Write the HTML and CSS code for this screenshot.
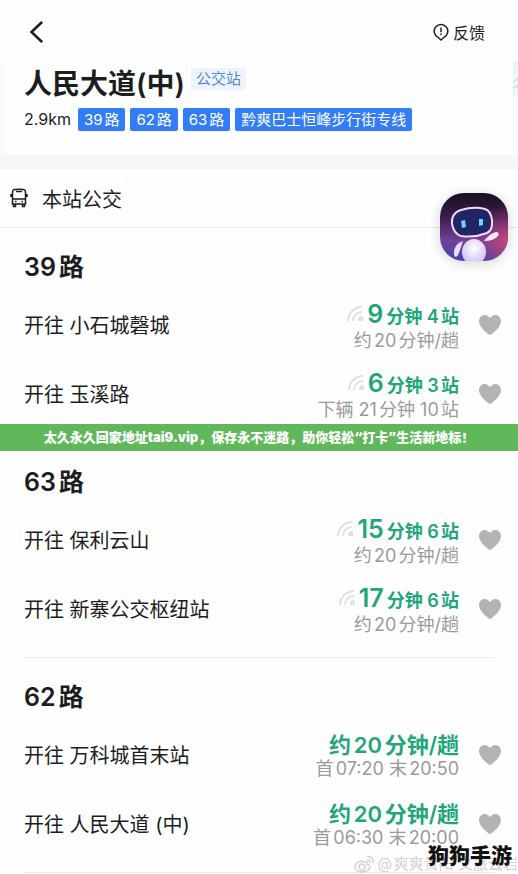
FILE: index.html
```html
<!DOCTYPE html>
<html lang="zh-CN">
<head>
    <meta charset="UTF-8">
    <meta name="viewport" content="width=device-width, initial-scale=1.0">
    <title>人民大道(中) 公交站</title>
    <link rel="stylesheet" href="styles.css">
</head>
<body>
    <!-- Shared icons -->
    <svg class="icon-defs" aria-hidden="true">
        <symbol id="heart" viewBox="0 0 24 22">
            <path d="M12 21 C11 21 1 13.500 1 7.200 C1 3.600 3.600 1 6.800 1 C9 1 11 2.300 12 4.200 C13 2.300 15 1 17.200 1 C20.400 1 23 3.600 23 7.200 C23 13.500 13 21 12 21 Z"/>
        </symbol>
        <symbol id="signal" viewBox="0 0 18 18">
            <path d="M2 16 A14 14 0 0 1 16 2 M7 16 A9 9 0 0 1 16 7"/>
            <path d="M13 15 A3 3 0 0 1 16 12 V15 Z"/>
        </symbol>
    </svg>

    <header class="topbar">
        <button class="icon-button" aria-label="返回">
            <svg class="back-icon" viewBox="0 0 14 22"><path d="M12.500 1.500 L2.500 11 L12.500 20.500"/></svg>
        </button>
        <button class="feedback">
            <svg class="feedback-icon" viewBox="0 0 16 18">
                <path d="M8 17 L5 14.300 A6.800 6.800 0 1 1 11 14.300 Z"/>
                <path d="M8 4.500 V9.200 M8 10.500 V12"/>
            </svg>
            反馈
        </button>
    </header>

    <section class="station">
        <svg class="map-edge" viewBox="0 0 5 34">
            <rect width="5" height="34" fill="#eef4f9" stroke="none"/>
            <path d="M0 21 L5 18 M0 27 L5 25" stroke="#c3d3dc"/>
        </svg>
        <div class="station-name">
            <h1>人民大道(中)</h1>
            <span class="station-type">公交站</span>
        </div>
        <div class="station-lines">
            <span class="distance">2.9km</span>
            <a class="line-tag" href="#line39">39路</a>
            <a class="line-tag" href="#line62">62路</a>
            <a class="line-tag" href="#line63">63路</a>
            <a class="line-tag" href="#line39">黔爽巴士恒峰步行街专线</a>
        </div>
    </section>

    <div class="section-title">
        <svg class="bus-icon" viewBox="0 0 18 20">
            <path d="M2.500 16 V4 Q2.500 2 4.500 1.600 Q9 .8 13.500 1.600 Q15.500 2 15.500 4 V16 Z M2.500 11 H15.500 M6 3.500 H12 M3.500 16 V18.500 H5.500 V16 M12.500 16 V18.500 H14.500 V16 M5 13.500 H6.500 M11.500 13.500 H13 M1 6 V9 M17 6 V9"/>
        </svg>
        <h2>本站公交</h2>
        <button class="assistant" aria-label="智能助手">
            <svg viewBox="0 0 68 68">
                <defs>
                    <linearGradient id="sky" x1="0" y1="0" x2="0" y2="1">
                        <stop offset="0" stop-color="#15101f"/>
                        <stop offset=".35" stop-color="#3c1c4b"/>
                        <stop offset=".7" stop-color="#71409b"/>
                        <stop offset="1" stop-color="#4840a6"/>
                    </linearGradient>
                    <radialGradient id="glow" cx="1" cy=".72" r=".55">
                        <stop offset="0" stop-color="#c54872"/>
                        <stop offset="1" stop-color="#a33f83" stop-opacity="0"/>
                    </radialGradient>
                    <radialGradient id="torso" cx=".5" cy=".35" r=".7">
                        <stop offset="0" stop-color="#fff"/>
                        <stop offset="1" stop-color="#c9b8f2"/>
                    </radialGradient>
                    <clipPath id="tile"><rect width="68" height="68" rx="24"/></clipPath>
                </defs>
                <g clip-path="url(#tile)">
                    <rect width="68" height="68" fill="url(#sky)"/>
                    <rect width="68" height="68" fill="url(#glow)"/>
                    <ellipse cx="34" cy="59" rx="12" ry="13" fill="url(#torso)"/>
                    <path d="M23 48 Q13 51 14 62 Q16 67 19 60 Z" fill="#e6def8"/>
                    <path d="M44 48 Q49 41 56 39 Q60 39 58 43 Q54 48 44 48 Z" fill="#f3e6f7"/>
                    <path d="M21 17 Q34 13 45 16 Q51 18 52 27 Q53 37 47 40 Q34 45 21 43 Q14 41 12 31 Q11 20 21 17 Z" fill="#242364" stroke="#eadcfa" stroke-width="2"/>
                    <path d="M21 28 L25 27 L26 34 L22 35 Z M39 26 L43 26 L43 32 L39 33 Z" fill="#60d9ff"/>
                </g>
            </svg>
        </button>
    </div>

    <main class="routes">
        <section class="route" id="line39">
            <h3>39路</h3>
            <div class="direction">
                <span class="destination">开往 小石城磬城</span>
                <div class="arrival">
                    <div class="next"><svg class="signal"><use href="#signal"/></svg><strong>9</strong> 分钟 4站</div>
                    <div class="later">约20分钟/趟</div>
                </div>
                <button class="favorite" aria-label="收藏"><svg><use href="#heart"/></svg></button>
            </div>
            <div class="direction">
                <span class="destination">开往 玉溪路</span>
                <div class="arrival">
                    <div class="next"><svg class="signal"><use href="#signal"/></svg><strong>6</strong> 分钟 3站</div>
                    <div class="later">下辆 21分钟 10站</div>
                </div>
                <button class="favorite" aria-label="收藏"><svg><use href="#heart"/></svg></button>
            </div>
            <p class="banner">太久永久回家地址tai9.vip，保存永不迷路，助你轻松“打卡”生活新地标！</p>
        </section>

        <section class="route" id="line63">
            <h3>63路</h3>
            <div class="direction">
                <span class="destination">开往 保利云山</span>
                <div class="arrival">
                    <div class="next"><svg class="signal"><use href="#signal"/></svg><strong>15</strong> 分钟 6站</div>
                    <div class="later">约20分钟/趟</div>
                </div>
                <button class="favorite" aria-label="收藏"><svg><use href="#heart"/></svg></button>
            </div>
            <div class="direction">
                <span class="destination">开往 新寨公交枢纽站</span>
                <div class="arrival">
                    <div class="next"><svg class="signal"><use href="#signal"/></svg><strong>17</strong> 分钟 6站</div>
                    <div class="later">约20分钟/趟</div>
                </div>
                <button class="favorite" aria-label="收藏"><svg><use href="#heart"/></svg></button>
            </div>
        </section>

        <section class="route" id="line62">
            <h3>62路</h3>
            <div class="direction">
                <span class="destination">开往 万科城首末站</span>
                <div class="arrival">
                    <div class="next interval">约20分钟/趟</div>
                    <div class="later">首07:20 末20:50</div>
                </div>
                <button class="favorite" aria-label="收藏"><svg><use href="#heart"/></svg></button>
            </div>
            <div class="direction">
                <span class="destination">开往 人民大道 (中)</span>
                <div class="arrival">
                    <div class="next interval">约20分钟/趟</div>
                    <div class="later">首06:30 末20:00</div>
                </div>
                <button class="favorite" aria-label="收藏"><svg><use href="#heart"/></svg></button>
            </div>
            <div class="credit">
                <svg class="weibo" viewBox="0 0 20 18">
                    <path d="M8 6 C4 6 1 9 1 12 C1 15 4 17 8 17 C13 17 16 14.500 16 12 C16 10 14 9.500 13 9 C13.500 6.500 11.500 6 9.500 7 Q9.500 6 8 6 Z M13 5 Q16 4.500 16 8 M13 1.500 Q19.500 1 19 8"/>
                    <circle cx="8" cy="12" r="3"/>
                </svg>
                <span>@爽爽贵阳 文旅云岩</span>
            </div>
            <div class="site-mark">狗狗手游</div>
        </section>
    </main>
</body>
</html>
```

FILE: styles.css
```css
:root {
    --text: #1c1d1f;
    --muted: #999a9c;
    --green: #21a67a;
    --blue: #327df6;
    --line: #ececee;
}

* {
    margin: 0;
    padding: 0;
    box-sizing: border-box;
}

body {
    font-family: Inter, "Noto Sans CJK SC", sans-serif;
    font-size: 20px;
    color: var(--text);
    background: #fefefe;
    overflow-x: hidden;
    text-autospace: normal;
}

button {
    border: none;
    background: none;
    color: inherit;
    font: inherit;
    cursor: pointer;
}

svg {
    display: block;
    fill: none;
    stroke: currentColor;
}

.icon-defs {
    position: absolute;
    width: 0;
    height: 0;
}

/* Top bar */
.topbar {
    display: flex;
    justify-content: space-between;
    align-items: center;
    height: 64px;
    padding: 0 33px 0 29px;
}

.back-icon {
    width: 14px;
    height: 22px;
    stroke-width: 2.5;
    stroke-linecap: round;
}

.feedback {
    display: flex;
    align-items: center;
    gap: 4px;
    font-size: 16px;
}

.feedback-icon {
    width: 16px;
    height: 18px;
    stroke-width: 1.5;
}

/* Station card */
.station {
    position: relative;
    padding: 0 19px 24px;
    border-right: 5px solid #fafbfd;
    border-left: 5px solid #fafbfd;
}

/* Bit of map showing beside the card */
.map-edge {
    position: absolute;
    top: -3px;
    right: -5px;
    width: 5px;
    height: 34px;
}

.station-name {
    display: flex;
    align-items: center;
    gap: 6px;
    height: 36px;
}

h1 {
    font-size: 28px;
    font-weight: 600;
    white-space: nowrap;
}

.station-type {
    margin-bottom: 6px;
    padding: 0 5px;
    font-size: 15px;
    line-height: 22px;
    color: #5286d6;
    background: #eef4fd;
    border-radius: 2px;
}

.station-lines {
    display: flex;
    align-items: center;
    gap: 5px;
    margin-top: 8px;
    font-size: 15px;
    line-height: 23px;
    white-space: nowrap;
}

.distance {
    margin-right: 2px;
    font-size: 16px;
}

.line-tag {
    padding: 0 6px;
    color: #fff;
    background: var(--blue);
    border-radius: 2px;
    text-decoration: none;
}

/* Section title */
.section-title {
    position: relative;
    display: flex;
    align-items: center;
    gap: 14px;
    height: 73px;
    padding: 0 10px;
    border-top: 14px solid #f5f6f9;
    border-bottom: 1px solid var(--line);
}

.bus-icon {
    width: 18px;
    height: 20px;
    stroke-width: 1.5;
}

h2 {
    font-size: 20px;
    font-weight: 400;
}

.assistant {
    position: absolute;
    top: 24px;
    right: 10px;
    width: 68px;
    height: 68px;
    border-radius: 24px;
    box-shadow: 0 2px 12px rgba(40, 40, 60, 0.2);
}

.assistant svg {
    stroke: none;
}

/* Routes */
.routes {
    padding: 0 24px;
}

.route {
    position: relative;
    padding: 18px 0 14px;
    border-bottom: 1px solid var(--line);
}

h3 {
    margin-bottom: 2px;
    font-size: 25px;
    font-weight: 600;
    line-height: 42px;
}

.direction {
    display: grid;
    grid-template-columns: 1fr auto 24px;
    align-items: center;
    column-gap: 19px;
    height: 69px;
    margin-right: -8px;
}

.arrival {
    padding-top: 3px;
    text-align: right;
    white-space: nowrap;
}

.next {
    display: flex;
    justify-content: flex-end;
    align-items: baseline;
    gap: 3px;
    font-size: 18px;
    font-weight: 600;
    line-height: 26px;
    color: var(--green);
}

.next strong {
    font-size: 25px;
    font-weight: 600;
}

.interval {
    font-size: 22px;
}

.later {
    font-size: 18px;
    line-height: 22px;
    color: var(--muted);
}

.signal {
    width: 18px;
    height: 18px;
    color: #e0e0e0;
    stroke-width: 2;
}

.favorite svg {
    width: 24px;
    height: 22px;
    fill: #b3b3b3;
    stroke: none;
}

/* Notice strip over the route divider */
.banner {
    position: absolute;
    right: -24px;
    bottom: -9px;
    left: -24px;
    font-size: 13px;
    font-weight: 900;
    line-height: 27px;
    text-align: center;
    white-space: nowrap;
    text-autospace: no-autospace;
    color: #fff;
    background: #61b85b;
}

/* Marks in the bottom corner */
.credit {
    position: absolute;
    right: -24px;
    bottom: -2px;
    display: flex;
    align-items: center;
    gap: 3px;
    font-size: 15px;
    line-height: 20px;
    white-space: nowrap;
    color: #d2d2d2;
}

.weibo {
    width: 20px;
    height: 18px;
    stroke-width: 1.5;
}

.site-mark {
    position: absolute;
    right: -18px;
    bottom: 1px;
    font-size: 21px;
    font-weight: 900;
    line-height: 30px;
    color: #111;
}
```
